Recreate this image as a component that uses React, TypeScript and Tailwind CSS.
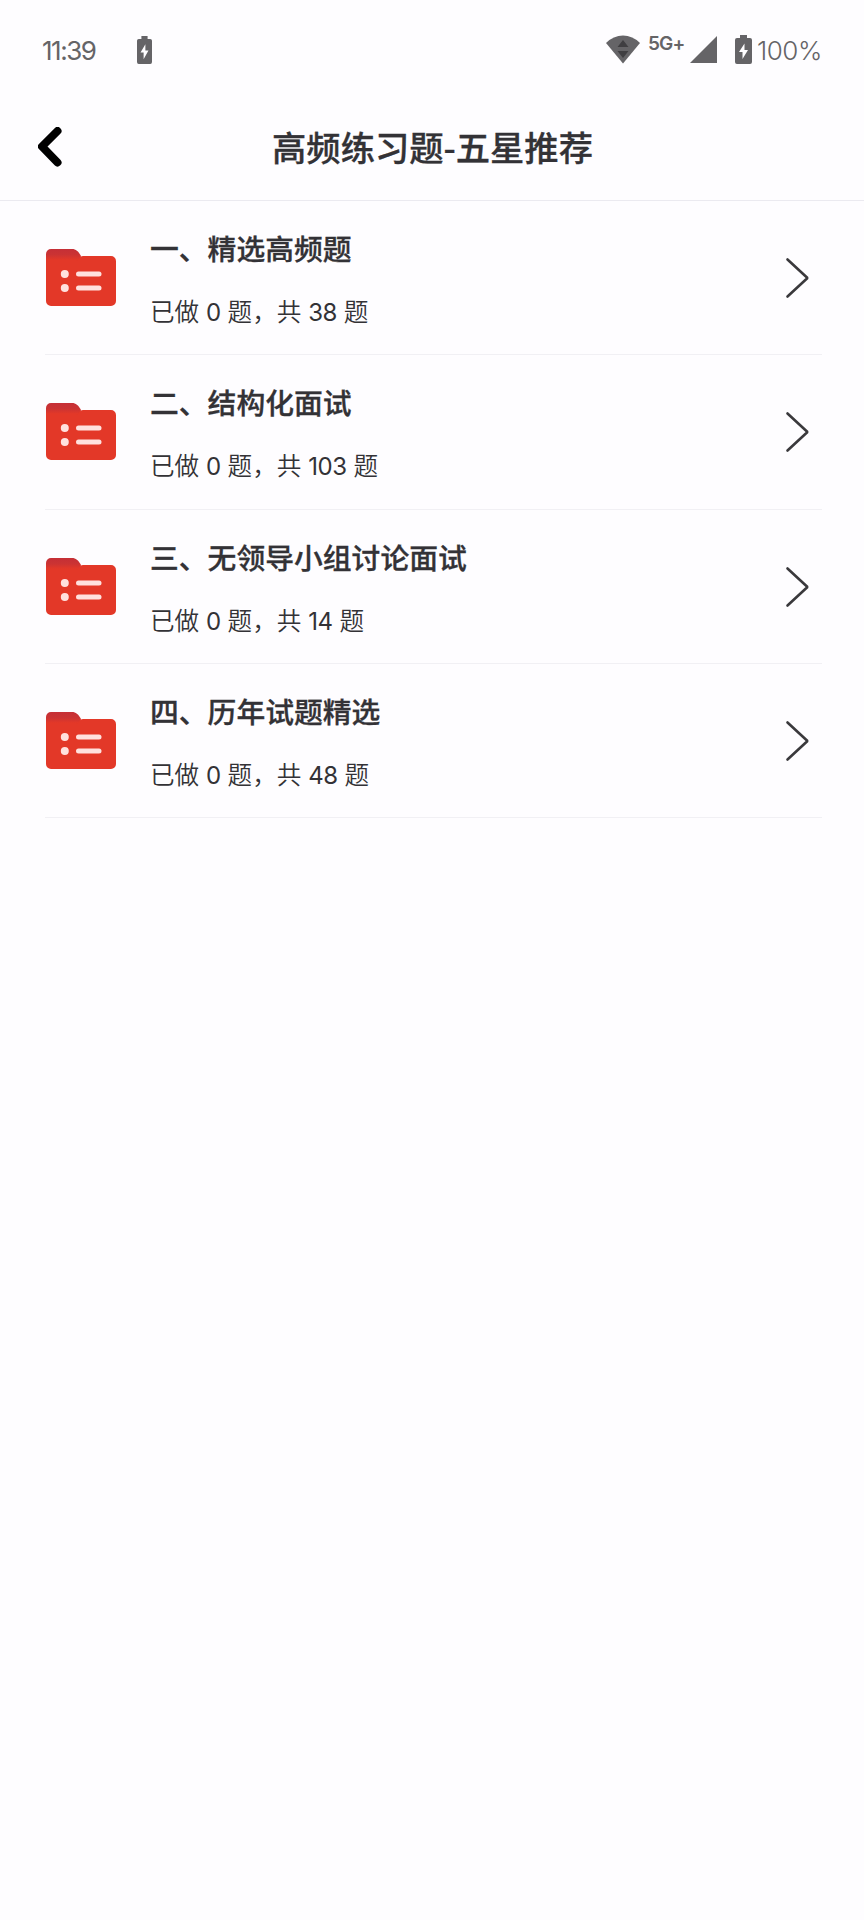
type Chapter = {
  id: number;
  name: string;
  done: number;
  total: number;
};

const CHAPTERS: Chapter[] = [
  { id: 1, name: "一、精选高频题", done: 0, total: 38 },
  { id: 2, name: "二、结构化面试", done: 0, total: 103 },
  { id: 3, name: "三、无领导小组讨论面试", done: 0, total: 14 },
  { id: 4, name: "四、历年试题精选", done: 0, total: 48 },
];

export default function App() {
  return (
    <main className="min-h-[1920px] w-full bg-[#fefdff] font-['Noto_Sans_CJK_SC',sans-serif] text-[#333236]">
      <StatusBar />
      <header className="flex h-[101px] items-center border-b border-[#ebeaf0] px-[38px] pb-[7px]">
        <button type="button" aria-label="返回" className="w-6">
          <BackIcon />
        </button>
        <h1 className="flex-1 pr-[23px] pb-px text-center text-[34.3px] leading-[48px] font-medium [-webkit-text-stroke:0.3px_#333236]">
          高频练习题-五星推荐
        </h1>
      </header>
      <ul className="mr-[42px] ml-[45px]">
        {CHAPTERS.map((c) => (
          <ChapterRow key={c.id} chapter={c} />
        ))}
      </ul>
    </main>
  );
}

function StatusBar() {
  return (
    <div className="flex h-[100px] items-start px-[42px] pt-[35px] font-['Inter',sans-serif] text-[#656467]">
      <span className="mt-[1px] w-[95px] text-[26px] leading-[30px] tracking-[-1.5px]">11:39</span>
      <BatteryIcon className="mt-[1px] h-7 w-[15px]" />
      <WifiIcon />
      <span className="ml-[8px] w-[42px] text-[19px] leading-[18px] font-semibold tracking-[-0.8px]">5G+</span>
      <svg className="mt-[1px] h-[27px] w-[27px]" viewBox="0 0 27 27" aria-hidden>
        <path d="M27 0v27H0z" fill="currentColor" />
      </svg>
      <BatteryIcon className="ml-[18px] h-[29px] w-[17px]" />
      <span className="mt-[1px] ml-[5px] text-[26px] leading-[30px] font-light tracking-[-0.4px]">100%</span>
    </div>
  );
}

function ChapterRow({ chapter }: { chapter: Chapter }) {
  return (
    <li className="flex h-[154.3px] items-start border-b border-[#f1f0f4] pl-[1px]">
      <FolderIcon />
      <div className="ml-[34px] flex-1 pt-[27px]">
        <h2 className="text-[28.8px] leading-[40px] font-medium [-webkit-text-stroke:0.3px_#333236]">{chapter.name}</h2>
        <p className="mt-[24px] text-[24.6px] leading-[36px] font-[350] [word-spacing:1.4px]">
          已做 <Count value={chapter.done} /> 题，共 <Count value={chapter.total} /> 题
        </p>
      </div>
      <svg className="mt-[56px] mr-[13px] h-[42px] w-[24px]" viewBox="0 0 24 42" fill="none" aria-hidden>
        <path d="M2.5 2.5 22.5 21 2.5 39.5" stroke="#3a393c" strokeWidth="2.6" strokeLinecap="round" strokeLinejoin="bevel" />
      </svg>
    </li>
  );
}

function Count({ value }: { value: number }) {
  return <span className="font-['Inter',sans-serif] text-[24px] font-normal tracking-[-0.5px]">{value}</span>;
}

function BackIcon() {
  return (
    <svg className="h-10 w-6" viewBox="0 0 24 40" fill="none" aria-hidden>
      <path d="M19.5 4 4 19.5 19.5 35.5" stroke="#000" strokeWidth="8" strokeLinecap="round" strokeLinejoin="round" />
    </svg>
  );
}

function FolderIcon() {
  return (
    <svg className="mt-[48px] h-[57px] w-[70px]" viewBox="0 0 70 57" aria-hidden>
      <defs>
        <linearGradient id="folder" x1="0" y1="0" x2="0" y2="57" gradientUnits="userSpaceOnUse">
          <stop offset="0" stopColor="#c52f36" />
          <stop offset="0.1" stopColor="#cb3333" />
          <stop offset="0.19" stopColor="#e33828" />
        </linearGradient>
      </defs>
      <path d="M0 5a5 5 0 0 1 5-5h21c4 0 6 2 9 7l-2 8H0z" fill="url(#folder)" />
      <path d="M0 12h30c3 0 3-5 7-5h28a5 5 0 0 1 5 5v40a5 5 0 0 1-5 5H5a5 5 0 0 1-5-5z" fill="#e33828" />
      <g fill="#ffe1de">
        <circle cx="18.800" cy="25" r="4" />
        <circle cx="18.800" cy="39" r="4" />
        <rect x="30" y="22.500" width="25.500" height="5" rx="2.500" />
        <rect x="30" y="36.500" width="25.500" height="5" rx="2.500" />
      </g>
    </svg>
  );
}

function BatteryIcon({ className }: { className: string }) {
  return (
    <svg className={className} viewBox="0 0 17 29" preserveAspectRatio="none" aria-hidden>
      <path d="M5 0h7v3h3q2 0 2 2v22q0 2-2 2H2q-2 0-2-2V5q0-2 2-2h3z" fill="currentColor" />
      <path d="M9.500 8.500v6.500H13l-5.500 9v-7H4z" fill="#fefdff" />
    </svg>
  );
}

function WifiIcon() {
  return (
    <svg className="ml-auto h-[29px] w-[34px]" viewBox="0 0 34 29" aria-hidden>
      <path d="M0 8Q7.500 0.500 17 0.500T34 8L17 28.500z" fill="currentColor" />
      <path d="M11.500 12 17 5l5.500 7zM11.500 16h11L17 23z" fill="#3f3e41" />
    </svg>
  );
}
